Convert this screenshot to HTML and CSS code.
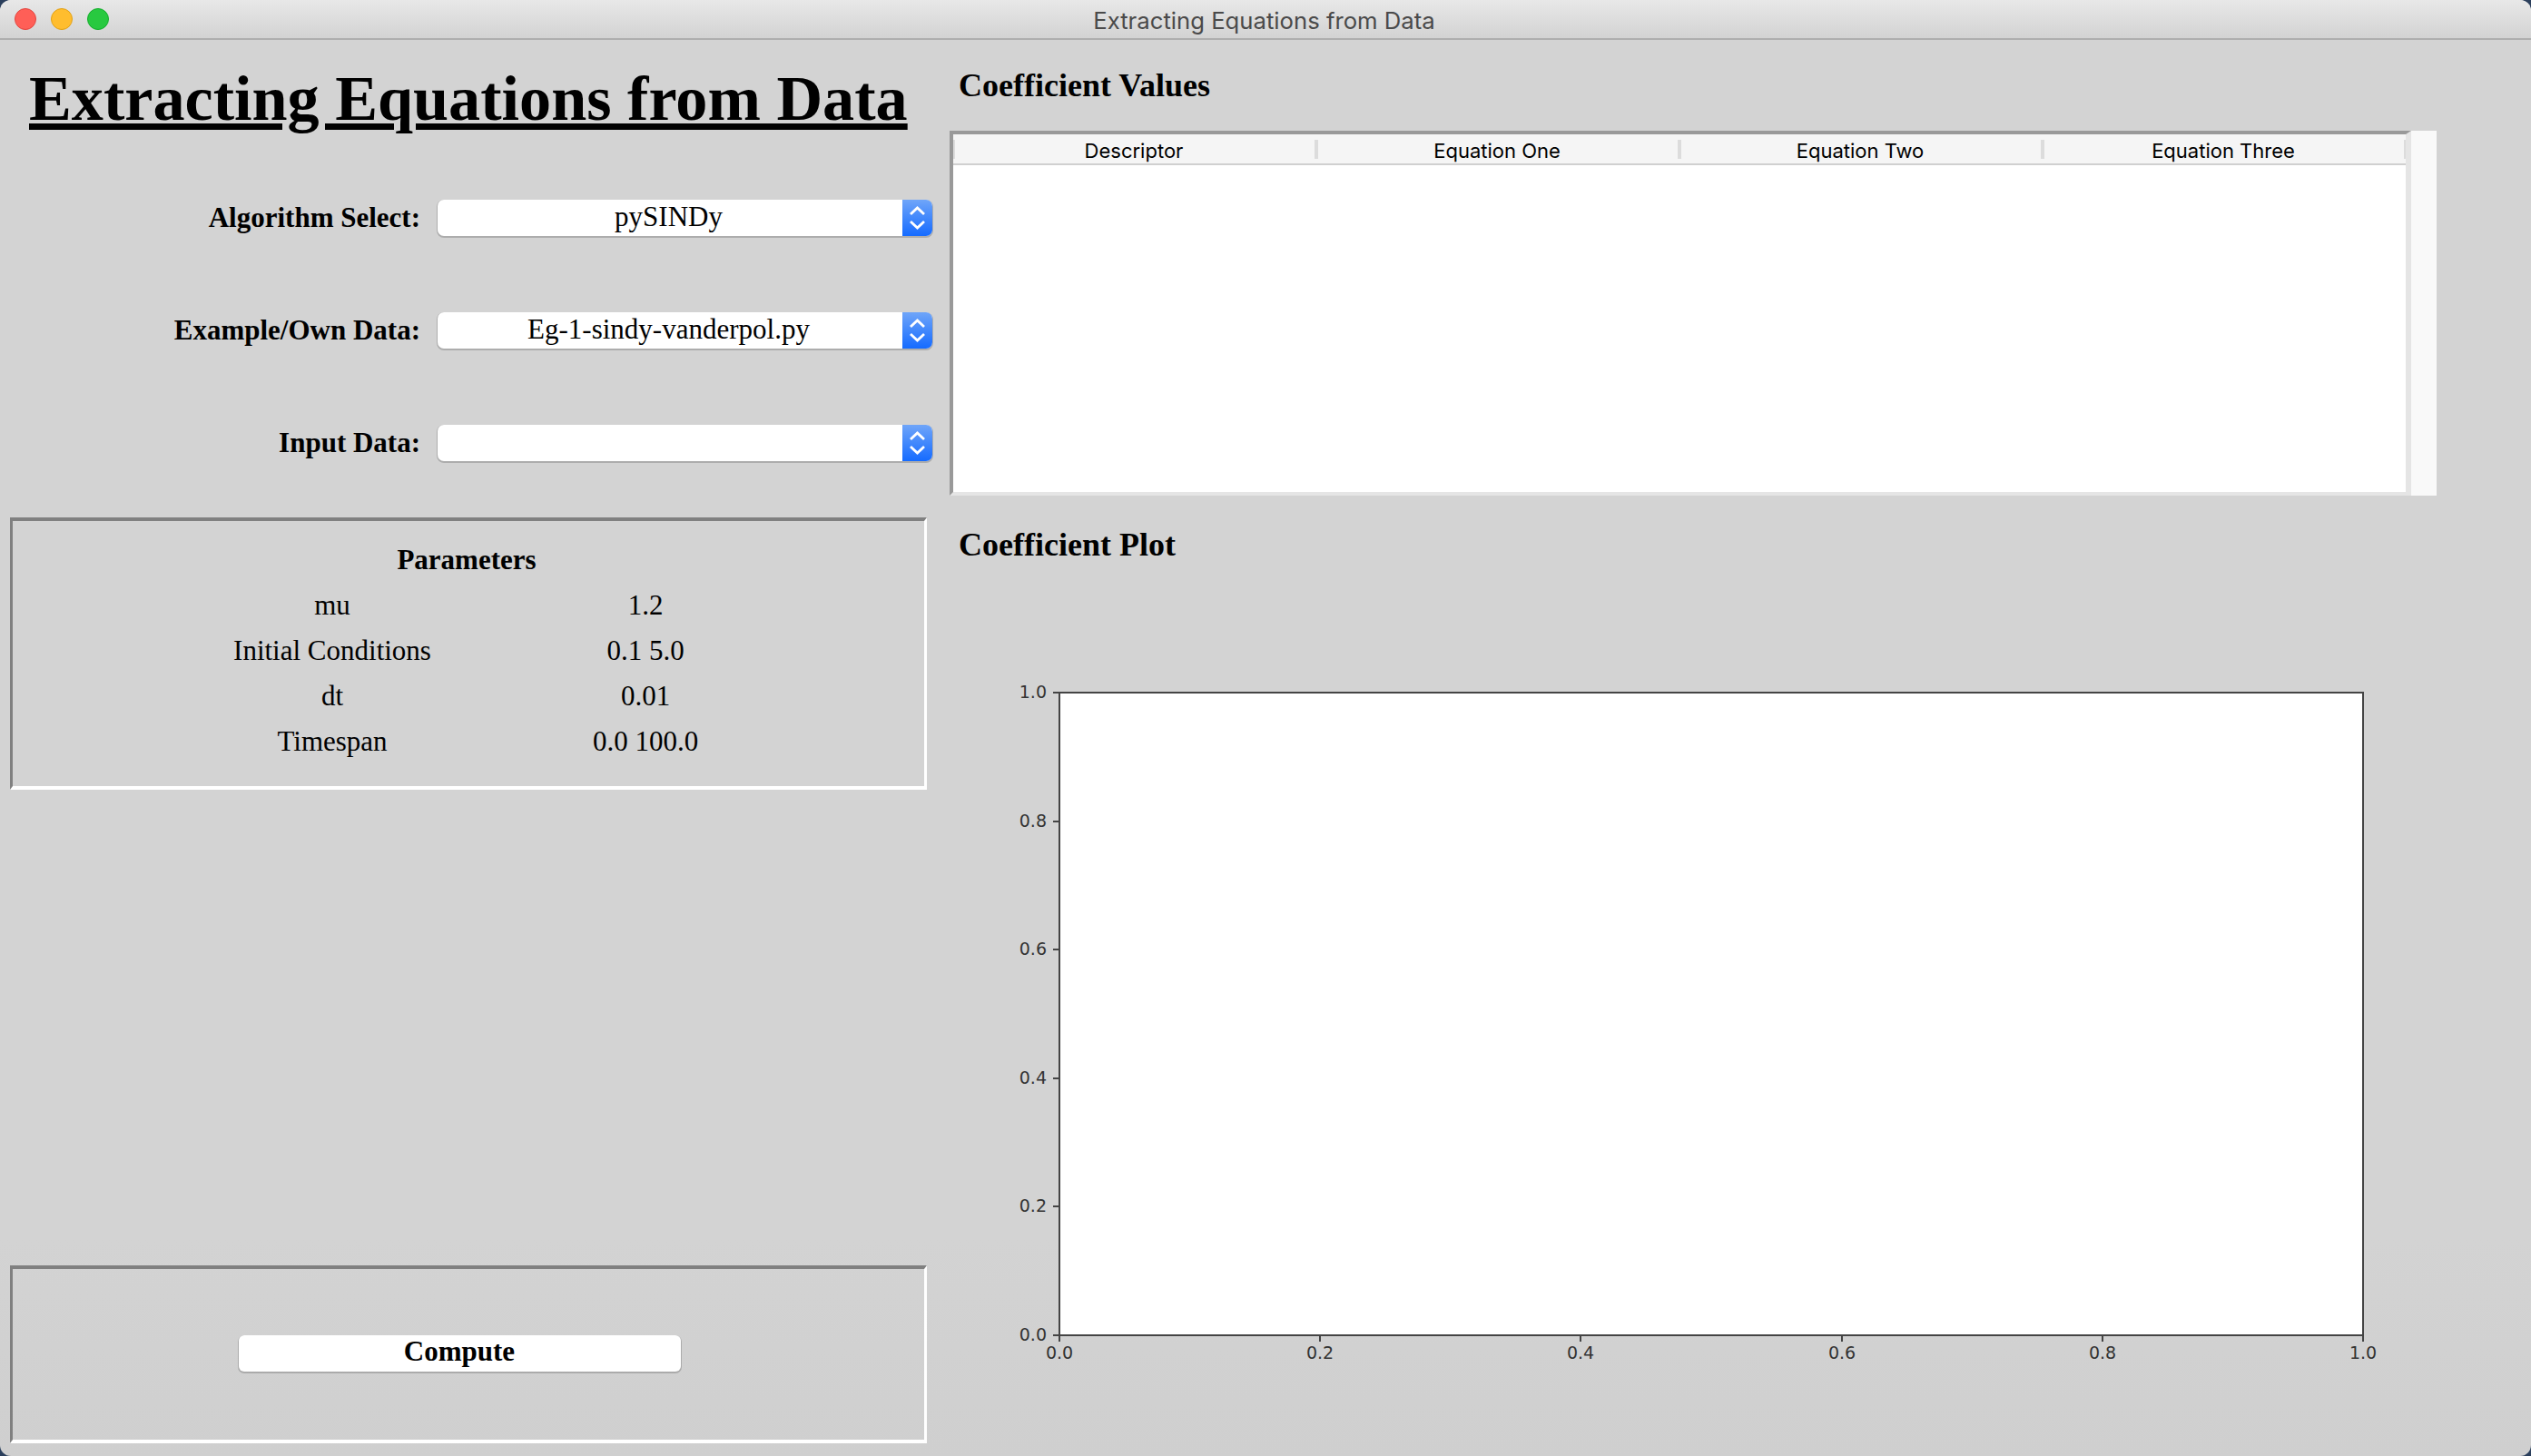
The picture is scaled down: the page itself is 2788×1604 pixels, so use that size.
FILE: index.html
```html
<!DOCTYPE html>
<html>
<head>
  <title>Extracting Equations from Data</title>
  <link rel="stylesheet" href="styles.css">
</head>
<body>
  <div class="window">
    <div class="titlebar">
      <div class="lights">
        <span class="light red"></span>
        <span class="light yellow"></span>
        <span class="light green"></span>
      </div>
      <span class="window-title">Extracting Equations from Data</span>
    </div>
    <div class="content">
      <div class="left">
        <h1 class="main-title">Extracting Equations from Data</h1>
        <div class="form-row">
          <label class="form-label">Algorithm Select:</label>
          <div class="combo">
            <span class="combo-text">pySINDy</span>
            <span class="combo-arrow"><svg width="33" height="40" viewBox="0 0 33 40"><path d="M9 16 L16.5 9 L24 16 M9 24 L16.5 31 L24 24" fill="none" stroke="#fff" stroke-width="2.8"/></svg></span>
          </div>
        </div>
        <div class="form-row">
          <label class="form-label">Example/Own Data:</label>
          <div class="combo">
            <span class="combo-text">Eg-1-sindy-vanderpol.py</span>
            <span class="combo-arrow"><svg width="33" height="40" viewBox="0 0 33 40"><path d="M9 16 L16.5 9 L24 16 M9 24 L16.5 31 L24 24" fill="none" stroke="#fff" stroke-width="2.8"/></svg></span>
          </div>
        </div>
        <div class="form-row">
          <label class="form-label">Input Data:</label>
          <div class="combo">
            <span class="combo-text"></span>
            <span class="combo-arrow"><svg width="33" height="40" viewBox="0 0 33 40"><path d="M9 16 L16.5 9 L24 16 M9 24 L16.5 31 L24 24" fill="none" stroke="#fff" stroke-width="2.8"/></svg></span>
          </div>
        </div>
        <div class="sunken params">
          <div class="params-title">Parameters</div>
          <div class="params-grid">
            <span>mu</span><span>1.2</span>
            <span>Initial Conditions</span><span>0.1 5.0</span>
            <span>dt</span><span>0.01</span>
            <span>Timespan</span><span>0.0 100.0</span>
          </div>
        </div>
        <div class="sunken compute-box">
          <button class="compute-btn">Compute</button>
        </div>
      </div>
      <div class="right">
        <h2 class="section-title">Coefficient Values</h2>
        <div class="table-frame">
          <div class="table-view">
            <div class="table-head">
              <span class="head-cell">Descriptor</span>
              <span class="head-cell">Equation One</span>
              <span class="head-cell">Equation Two</span>
              <span class="head-cell">Equation Three</span>
            </div>
          </div>
          <div class="scroll-track"></div>
        </div>
        <h2 class="section-title plot-title">Coefficient Plot</h2>
        <svg class="plot" width="1638" height="979" viewBox="1046 625 1638 979">
          <rect x="1167" y="763" width="1436" height="708" fill="#fff" stroke="#444" stroke-width="2"/>
          <g stroke="#444" stroke-width="2">
            <path d="M1160 763H1167M1160 905H1167M1160 1046H1167M1160 1188H1167M1160 1329H1167M1160 1471H1167"/>
            <path d="M1167 1471V1478M1454 1471V1478M1741 1471V1478M2029 1471V1478M2316 1471V1478M2603 1471V1478"/>
          </g>
          <g class="tick-text" text-anchor="end">
            <text x="1153" y="769">1.0</text>
            <text x="1153" y="911">0.8</text>
            <text x="1153" y="1052">0.6</text>
            <text x="1153" y="1194">0.4</text>
            <text x="1153" y="1335">0.2</text>
            <text x="1153" y="1477">0.0</text>
          </g>
          <g class="tick-text" text-anchor="middle">
            <text x="1167" y="1497">0.0</text>
            <text x="1454" y="1497">0.2</text>
            <text x="1741" y="1497">0.4</text>
            <text x="2029" y="1497">0.6</text>
            <text x="2316" y="1497">0.8</text>
            <text x="2603" y="1497">1.0</text>
          </g>
        </svg>
      </div>
    </div>
  </div>
</body>
</html>
```

FILE: styles.css
```css
html, body {
  margin: 0;
  padding: 0;
  height: 100%;
  background: #2b3f5c;
  overflow: hidden;
}

.window {
  width: 2788px;
  height: 1604px;
  border-radius: 12px;
  overflow: hidden;
  display: flex;
  flex-direction: column;
  background: linear-gradient(#d3d3d3 85%, #cfcfcf);
  font-family: "Liberation Serif", serif;
  color: #000;
}

/* title bar */
.titlebar {
  height: 44px;
  flex: none;
  box-sizing: border-box;
  border-bottom: 2px solid #aeaeae;
  background: linear-gradient(#e8e8e8, #d3d3d3);
  display: flex;
  align-items: center;
  justify-content: center;
  position: relative;
}

.lights {
  position: absolute;
  left: 16px;
  top: 9px;
  display: flex;
  gap: 16px;
}

.light {
  width: 24px;
  height: 24px;
  box-sizing: border-box;
  border-radius: 50%;
  border: 1px solid;
}

.red { background: #ff5f57; border-color: #e2463f; }
.yellow { background: #ffbd2e; border-color: #e1a116; }
.green { background: #28c940; border-color: #14ae2c; }

.window-title {
  font-family: Inter, sans-serif;
  font-size: 25.7px;
  color: #4a4a4a;
  padding: 2px 3px 0 0;
}

.content {
  flex: 1;
  display: flex;
  gap: 25px;
  padding-left: 11px;
  min-height: 0;
}

/* left column */
.left {
  width: 1010px;
  flex: none;
  display: flex;
  flex-direction: column;
  padding-bottom: 14px;
}

.main-title {
  margin: 22px 0 70px 21px;
  font-size: 70.2px;
  line-height: 84px;
  font-weight: bold;
  text-decoration: underline;
  white-space: nowrap;
}

.form-row {
  display: flex;
  align-items: center;
  gap: 19px;
  height: 40px;
  margin-bottom: 84px;
}

.form-label {
  width: 452px;
  flex: none;
  text-align: right;
  font-size: 31px;
  line-height: 36px;
  font-weight: bold;
}

.combo {
  width: 545px;
  height: 40px;
  flex: none;
  display: flex;
  background: #fff;
  border-radius: 7px;
  box-shadow: 0 1px 0 1px rgba(0, 0, 0, 0.18);
  overflow: hidden;
}

.combo-text {
  flex: 1;
  padding-right: 3px;
  text-align: center;
  font-size: 31px;
  line-height: 38px;
}

.combo-arrow {
  width: 33px;
  height: 40px;
  background: linear-gradient(#6fa5f9, #156bff);
  display: block;
}

.combo-arrow svg {
  display: block;
}

.sunken {
  box-sizing: border-box;
  border-style: solid;
  border-color: #808080 #fff #fff #808080;
  border-width: 4px 3px 4px 3px;
}

.params {
  height: 300px;
  margin-top: -22px;
}

.params-title {
  text-align: center;
  font-size: 31px;
  font-weight: bold;
  line-height: 50px;
  margin-top: 18px;
  padding-right: 4px;
}

.params-grid {
  display: grid;
  grid-template-columns: 440px 250px;
  grid-auto-rows: 50px;
  padding-left: 132px;
  font-size: 31px;
  line-height: 50px;
  text-align: center;
}

.compute-box {
  height: 196px;
  margin-top: auto;
  display: flex;
  align-items: center;
  justify-content: center;
}

.compute-btn {
  width: 487px;
  height: 40px;
  margin: 0 20px 2px 0;
  padding: 0 0 4px;
  border: 0;
  border-radius: 6px;
  background: #fff;
  box-shadow: 0 1px 0 1px rgba(0, 0, 0, 0.18);
  font-family: "Liberation Serif", serif;
  font-size: 31px;
  font-weight: bold;
  color: #000;
}

/* right column */
.right {
  flex: 1;
  display: flex;
  flex-direction: column;
  min-width: 0;
}

.section-title {
  margin: 25px 0 25px 10px;
  font-size: 36px;
  line-height: 50px;
  font-weight: bold;
}

.plot-title {
  margin-top: 29px;
  margin-bottom: 0;
}

.table-frame {
  width: 1638px;
  height: 402px;
  display: flex;
  flex: none;
}

.table-view {
  width: 1610px;
  box-sizing: border-box;
  background: #fff;
  border-style: solid;
  border-color: #999 #e5e5e5 #e5e5e5 #999;
  border-width: 4px 6px 4px 4px;
}

.table-head {
  display: flex;
  height: 34px;
  box-sizing: border-box;
  background: #f5f5f5;
  border-bottom: 2px solid #d0d0d0;
}

.head-cell {
  width: 400px;
  flex: none;
  margin: 6px 0 5px;
  padding-right: 2px;
  box-sizing: border-box;
  border-left: 2px solid #dcdcdc;
  border-right: 2px solid #dcdcdc;
  text-align: center;
  font-family: Inter, sans-serif;
  font-size: 22px;
  line-height: 24px;
}

.scroll-track {
  flex: 1;
  background: #f9f9f9;
}

.plot {
  display: block;
  flex: none;
}

.tick-text {
  font-family: "DejaVu Sans", sans-serif;
  font-size: 19px;
  fill: #333;
}
```
